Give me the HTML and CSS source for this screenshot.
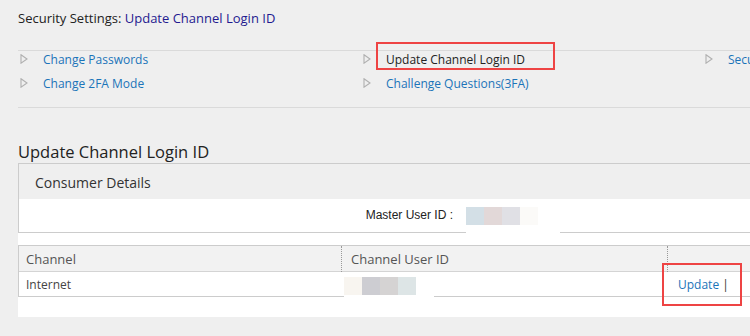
FILE: index.html
```html
<!DOCTYPE html>
<html>
<head>
<meta charset="utf-8">
<link rel="stylesheet" href="styles.css">
</head>
<body>
<div class="page">
  <div class="title">Security Settings: <span class="title-cur">Update Channel Login ID</span></div>
  <div class="nav">
    <div class="nav-item"><svg class="tri" viewBox="0 0 8 10"><polygon points="1,0.8 7,5 1,9.2"/></svg><a class="lnk">Change Passwords</a></div>
    <div class="nav-item"><svg class="tri" viewBox="0 0 8 10"><polygon points="1,0.8 7,5 1,9.2"/></svg><span class="cur">Update Channel Login ID</span></div>
    <div class="nav-item"><svg class="tri" viewBox="0 0 8 10"><polygon points="1,0.8 7,5 1,9.2"/></svg><a class="lnk">Security Image</a></div>
    <div class="nav-item"><svg class="tri" viewBox="0 0 8 10"><polygon points="1,0.8 7,5 1,9.2"/></svg><a class="lnk">Change 2FA Mode</a></div>
    <div class="nav-item"><svg class="tri" viewBox="0 0 8 10"><polygon points="1,0.8 7,5 1,9.2"/></svg><a class="lnk">Challenge Questions(3FA)</a></div>
    <div class="nav-item"></div>
  </div>
  <h2 class="heading">Update Channel Login ID</h2>
  <div class="card">
    <div class="panel">
      <div class="panel-head">Consumer Details</div>
      <div class="panel-body">
        <div class="lbl">Master User ID :</div>
        <div class="blur-wrap"><div class="blur"><i style="background:#d3dfe6"></i><i style="background:#e2d8d8"></i><i style="background:#e0e0e5"></i><i style="background:#fbfaf8"></i></div></div>
      </div>
    </div>
    <div class="grid">
      <div class="grow ghead">
        <div class="c1">Channel</div>
        <div class="c2 sep">Channel User ID</div>
        <div class="c3 sep"></div>
      </div>
      <div class="grow gbody">
        <div class="c1">Internet</div>
        <div class="c2 imgcell"><div class="blur-wrap2"><div class="blur"><i style="background:#f8f5f0"></i><i style="background:#cdcdd2"></i><i style="background:#d5d3d3"></i><i style="background:#dde5e6"></i></div></div></div>
        <div class="c3"><a class="lnk">Update</a> <span class="bar">|</span></div>
      </div>
    </div>
  </div>
</div>
<div class="mark mark1"></div>
<div class="mark mark2"></div>
</body>
</html>
```
FILE: styles.css
```css
* { box-sizing: border-box; }
html, body { margin: 0; padding: 0; }
body {
  background: #efefef;
  font-family: "Open Sans", "Liberation Sans", sans-serif;
  color: #222;
  width: 750px;
  height: 336px;
  overflow: hidden;
  position: relative;
}
.page { padding-left: 18px; }
.title {
  font-size: 13px;
  line-height: 18px;
  padding-top: 9px;
  height: 50px;
  color: #222;
  white-space: nowrap;
}
.title-cur { color: #1f1a8f; }
.nav {
  border-top: 1px solid #dadada;
  border-bottom: 1px solid #dadada;
  display: grid;
  grid-template-columns: 343px 342px 1fr;
  row-gap: 8px;
  padding: 0 0 16px 2px;
  width: 732px;
}
.nav-item {
  display: flex;
  align-items: center;
  height: 16px;
  font-size: 12px;
  white-space: nowrap;
  overflow: hidden;
}
.tri {
  width: 8px;
  height: 10px;
  flex: none;
  margin-right: 15px;
}
.tri polygon { fill: none; stroke: #b0b0b0; stroke-width: 1.1; }
.lnk { color: #1b74b9; text-decoration: none; }
.cur { color: #222; }
.heading {
  font-size: 16.5px;
  font-weight: normal;
  line-height: 20px;
  margin: 34px 0 0;
  color: #222;
}
.card {
  background: #fff;
  margin-top: 1px;
  padding-bottom: 20px;
  width: 732px;
}
.panel {
  border: 1px solid #cccccc;
  border-right: none;
}
.panel-head {
  background: #efefef;
  height: 35px;
  padding: 9px 0 0 16px;
  font-size: 14px;
  line-height: 20px;
  color: #333;
}
.panel-body {
  display: flex;
  height: 33px;
  align-items: center;
}
.lbl {
  width: 434px;
  text-align: right;
  font-family: "Liberation Sans", Arial, sans-serif;
  font-size: 12px;
  color: #222;
  padding-bottom: 1px;
}
.blur-wrap {
  align-self: stretch;
  margin: 0 0 -1px 13px;
  padding: 8px 22px 0 0;
  background: #fff;
  position: relative;
}
.blur { display: flex; height: 18px; }
.blur i { width: 18px; height: 18px; display: block; }
.grid {
  margin-top: 12px;
  border-top: 1px solid #cccccc;
  border-left: 1px solid #cccccc;
}
.grow {
  display: grid;
  grid-template-columns: 322px 326px 1fr;
}
.ghead {
  background: #f2f2f2;
  height: 26px;
  line-height: 26px;
  font-size: 13px;
  border-bottom: 1px solid #d4d4d4;
  color: #555;
}
.gbody {
  height: 25px;
  line-height: 26px;
  font-size: 12px;
  border-bottom: 1px solid #cccccc;
  color: #444;
}
.c1 { padding-left: 7px; }
.c2 { padding-left: 9px; }
.c3 { padding-left: 10px; }
.sep { border-left: 1px dotted #999; }
.ghead .c3 { padding-left: 0; }
.imgcell { padding-left: 3px; }
.blur-wrap2 {
  display: inline-block;
  vertical-align: top;
  margin-top: 5px;
  padding-right: 18px;
  height: 20px;
  background: #fff;
  position: relative;
}
.gbody .c3 { padding-left: 11px; }
.bar { color: #333; }
.mark {
  position: absolute;
  border: 2px solid #ee4444;
}
.mark1 { left: 376px; top: 42px; width: 179px; height: 28px; }
.mark2 { left: 662px; top: 263px; width: 80px; height: 43px; }
```
